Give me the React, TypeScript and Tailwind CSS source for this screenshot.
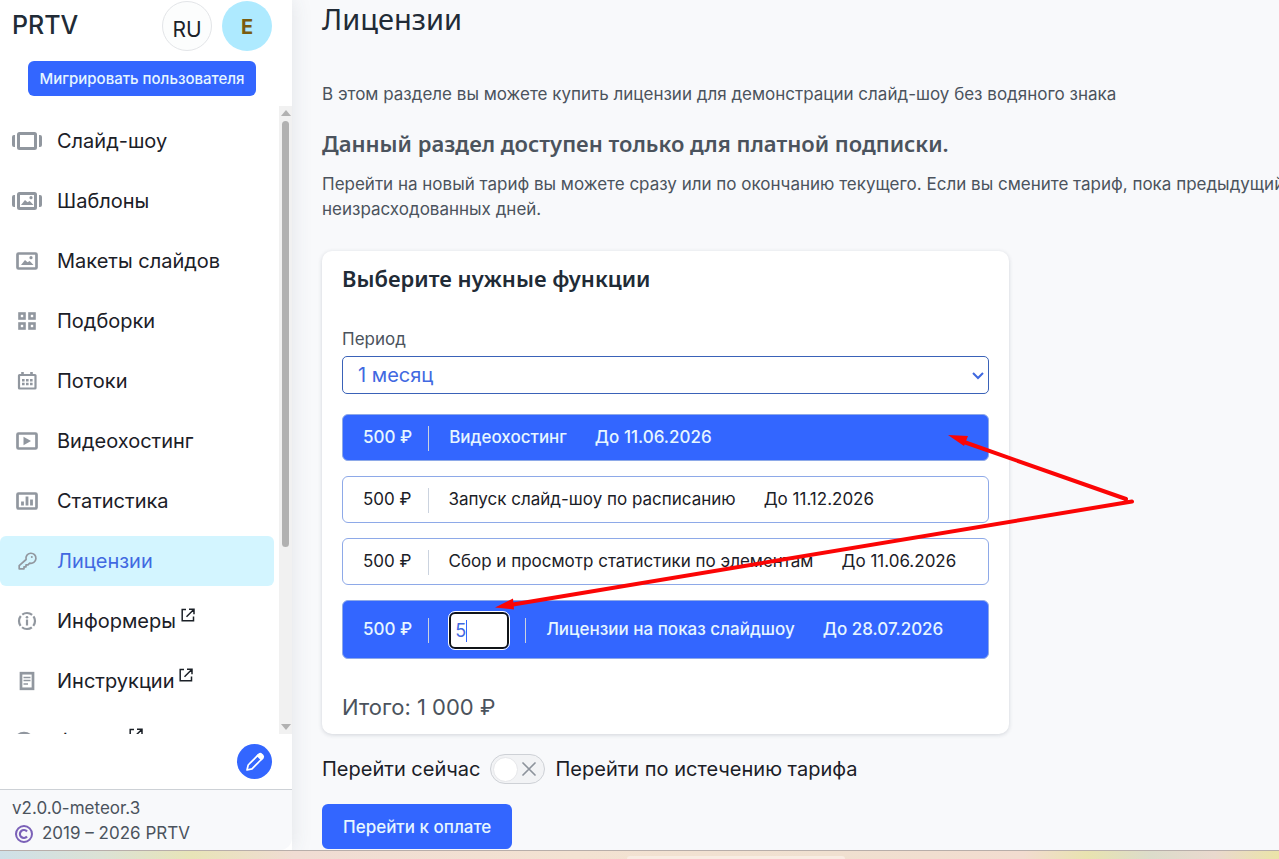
import { ReactNode, useState } from "react";
import { clsx } from "clsx";

type IconName =
  | "slideshow"
  | "templates"
  | "image"
  | "grid"
  | "calendar"
  | "video"
  | "stats"
  | "key"
  | "info"
  | "doc"
  | "forum";

interface MenuItem {
  label: string;
  icon: IconName;
  external?: boolean;
}

const menuItems: MenuItem[] = [
  { label: "Слайд-шоу", icon: "slideshow" },
  { label: "Шаблоны", icon: "templates" },
  { label: "Макеты слайдов", icon: "image" },
  { label: "Подборки", icon: "grid" },
  { label: "Потоки", icon: "calendar" },
  { label: "Видеохостинг", icon: "video" },
  { label: "Статистика", icon: "stats" },
  { label: "Лицензии", icon: "key" },
  { label: "Информеры", icon: "info", external: true },
  { label: "Инструкции", icon: "doc", external: true },
  { label: "Форум", icon: "forum", external: true },
];

const picture = (
  <g fill="currentColor" stroke="none">
    <path d="M9 19l4-5 2.500 2.300 2.200-1.300 3.800 4z" />
    <circle cx="19" cy="11.700" r="1.600" />
  </g>
);

const sideBars = (
  <path
    d="M3 9v12h-1a2 2 0 0 1-2-2v-8a2 2 0 0 1 2-2zM27 9v12h1a2 2 0 0 0 2-2v-8a2 2 0 0 0-2-2z"
    fill="currentColor"
    stroke="none"
  />
);

const iconShapes: Record<IconName, ReactNode> = {
  slideshow: (
    <>
      <rect x="6.500" y="7.500" width="17" height="15" rx="1" strokeWidth="3" />
      {sideBars}
    </>
  ),
  templates: (
    <>
      <rect x="6.500" y="7.500" width="17" height="15" rx="1" strokeWidth="3" />
      {sideBars}
      {picture}
    </>
  ),
  image: (
    <>
      <rect x="5.500" y="7.500" width="19" height="15" rx="1" />
      {picture}
    </>
  ),
  grid: (
    <g strokeWidth="2.600">
      <rect x="7.500" y="7.500" width="5" height="5" />
      <rect x="17.500" y="7.500" width="5" height="5" />
      <rect x="7.500" y="17.500" width="5" height="5" />
      <rect x="17.500" y="17.500" width="5" height="5" />
    </g>
  ),
  calendar: (
    <>
      <rect x="7" y="9" width="16.500" height="13.500" rx="0.500" strokeWidth="2.200" />
      <path d="M10.500 6v4M19.500 6v4" strokeWidth="2.600" />
      <path
        d="M10 14.300h2.600M14 14.300h2.600M18 14.300h2.600M10 18h2.600M14 18h2.600M18 18h2.600"
        strokeWidth="2.600"
      />
    </>
  ),
  video: (
    <>
      <rect x="5.500" y="7.500" width="19" height="15" rx="1" />
      <path d="M11.500 10.800v8.400l7.500-4.200z" fill="currentColor" stroke="none" />
    </>
  ),
  stats: (
    <>
      <rect x="5.500" y="7.500" width="19" height="15" rx="1" />
      <path d="M10.500 19.500v-4M15 19.500v-9M19.500 19.500v-6" strokeWidth="2.800" />
    </>
  ),
  key: (
    <>
      <path
        d="M14.100 13.500a5 5 0 1 1 3.600 3.600l-1.700 1.700h-2v2h-2v2H7.200v-3.200z"
        strokeWidth="1.700"
        strokeLinejoin="round"
      />
      <circle cx="19.800" cy="11" r="1" fill="currentColor" stroke="none" />
    </>
  ),
  info: (
    <>
      <circle cx="15" cy="15" r="8" strokeWidth="2.200" strokeDasharray="10.560 2" strokeDashoffset="-7.300" />
      <path d="M15 13.500v6" strokeWidth="2.200" />
      <circle cx="15" cy="11.300" r="1.300" fill="currentColor" stroke="none" />
    </>
  ),
  doc: (
    <>
      <rect x="9" y="7.200" width="12" height="15.600" />
      <path d="M11.500 11.500h7M11.500 14.500h7M11.500 18h4.500" strokeWidth="1.700" />
    </>
  ),
  forum: <circle cx="12" cy="16" r="9" />,
};

function MenuIcon({ name }: { name: IconName }) {
  return (
    <svg
      viewBox="0 0 30 30"
      className="size-[30px] shrink-0 text-[#91979f]"
      fill="none"
      stroke="currentColor"
      strokeWidth="2.700"
      aria-hidden="true"
    >
      {iconShapes[name]}
    </svg>
  );
}

function ExternalIcon() {
  return (
    <svg
      viewBox="0 0 14 14"
      className="ml-[5px] mb-3 size-3.5"
      fill="none"
      stroke="currentColor"
      strokeWidth="1.500"
      aria-hidden="true"
    >
      <path d="M5 1.500H1.200v11.300h11.300V8.500M8 1.200h5v5M13 1.200L5.500 8.700" />
    </svg>
  );
}

function Sidebar() {
  return (
    <aside className="flex w-[292px] shrink-0 flex-col bg-white shadow-[0_0_20px_rgba(60,70,90,0.12)]">
      <header className="h-[106px] shrink-0 pt-px">
        <div className="flex items-center gap-2.5 pr-5 pl-3">
          <a href="#" className="mr-auto text-[25px] font-medium text-[#212b36]">
            PRTV
          </a>
          <button className="size-[50px] rounded-full border border-[#e3e5e8] bg-[#fcfdfd] pt-2 text-[21px] text-[#1b2229]">
            RU
          </button>
          <button className="size-[50px] rounded-full bg-[#aeeaff] pt-0.5 text-xl font-bold text-[#7a5c10]">
            E
          </button>
        </div>
        <button className="mt-2.5 ml-7 h-[35px] w-[228px] rounded-md bg-[#3366ff] pt-0.5 text-[15px] font-medium text-[#e6f6ff]">
          Мигрировать пользователя
        </button>
      </header>

      <div className="flex min-h-0 flex-1">
        <nav className="flex flex-1 flex-col gap-2.5 overflow-hidden pt-2.5 pr-[5px]">
          {menuItems.map((item) => {
            const active = item.icon === "key";
            return (
              <a
                key={item.label}
                href="#"
                className={clsx(
                  "flex h-[50px] shrink-0 items-center rounded-md pl-3 text-xl",
                  active ? "bg-[#d3f5ff] text-[#4169e1]" : "text-[#1b2027]"
                )}
              >
                <MenuIcon name={item.icon} />
                <span className="ml-[15px]">{item.label}</span>
                {item.external && <ExternalIcon />}
              </a>
            );
          })}
        </nav>
        {/* scrollbar */}
        <div className="flex w-[13px] flex-col items-center bg-[#f1f1f1] py-1">
          <div className="border-x-5 border-b-6 border-x-transparent border-b-[#b1b1b1]" />
          <div className="mt-[5px] h-[426px] w-[7px] rounded-full bg-[#b1b1b1]" />
          <div className="mt-auto border-x-5 border-t-6 border-x-transparent border-t-[#b1b1b1]" />
        </div>
      </div>

      <div className="flex h-[55px] shrink-0 items-start justify-end pt-2.5 pr-5">
        <button
          aria-label="Редактировать"
          className="flex size-[35px] items-center justify-center rounded-full bg-[#3366ff] text-white"
        >
          <svg viewBox="0 0 20 20" className="size-5" fill="none" stroke="currentColor" strokeWidth="1.700" strokeLinejoin="round">
            <path d="M2 18l1.200-5L13 3.200l3.800 3.800L7 16.800z" />
            <path d="M12.500 3.700l1.700-1.700q1.300-.8 2.600.5l.7.700q1.300 1.300.5 2.600l-1.700 1.700z" fill="currentColor" />
          </svg>
        </button>
      </div>

      <footer className="h-[61px] shrink-0 rounded-br-xl border-t border-[#cdd1d6] bg-[#f8f9fb] pt-1.5 pl-3 text-[17px] leading-[25px] text-[#4b535d]">
        <p>v2.0.0-meteor.3</p>
        <p className="flex items-center">
          <svg viewBox="0 0 20 20" className="ml-0.5 mr-2 size-5" fill="none" stroke="#7b61b8" strokeWidth="2" aria-hidden="true">
            <circle cx="10" cy="10" r="8" />
            <path d="M13 7.500a4 4 0 1 0 0 5" strokeWidth="2.200" />
          </svg>
          2019 – 2026 PRTV
        </p>
      </footer>
    </aside>
  );
}

interface Feature {
  id: string;
  title: string;
  until: string;
}

const features: Feature[] = [
  { id: "video", title: "Видеохостинг", until: "11.06.2026" },
  { id: "schedule", title: "Запуск слайд-шоу по расписанию", until: "11.12.2026" },
  { id: "elements", title: "Сбор и просмотр статистики по элементам", until: "11.06.2026" },
];

const rowClass = "flex items-center rounded-md border border-[#8ea9e8] px-5 pt-px text-[17px] whitespace-nowrap";

function Divider() {
  return <span className="mx-4 h-[25px] w-px shrink-0 bg-[#cbd3df]" />;
}

function FeatureForm() {
  const [selected, setSelected] = useState<string[]>(["video"]);
  const [count, setCount] = useState("5");

  const toggle = (id: string) => {
    setSelected(
      selected.includes(id) ? selected.filter((s) => s !== id) : [...selected, id]
    );
  };

  return (
    <section className="mt-[29px] w-full max-w-[687px] rounded-[10px] bg-white px-5 pt-[11px] pb-[11px] shadow-[0_1px_4px_rgba(40,50,70,0.18)]">
      <h3 className="font-['Noto_Sans',sans-serif] text-[22px] leading-8 font-semibold text-[#212b36]">
        Выберите нужные функции
      </h3>
      <label htmlFor="period" className="mt-[33px] block text-[17px] leading-[25px]">
        Период
      </label>
      <div className="relative mt-1">
        <select
          id="period"
          className="h-[38px] w-full appearance-none rounded-[5px] border border-[#3a62b8] bg-white pl-[15px] text-xl text-[#4169e1]"
        >
          <option>1 месяц</option>
        </select>
        <svg
          viewBox="0 0 12 8"
          className="pointer-events-none absolute top-4 right-[5px] h-2 w-3"
          fill="none"
          stroke="#3f68df"
          strokeWidth="2"
          aria-hidden="true"
        >
          <path d="M1 1l5 5 5-5" />
        </svg>
      </div>

      <div className="mt-5 flex flex-col gap-[15px]">
        {features.map((feature) => {
          const checked = selected.includes(feature.id);
          return (
            <label
              key={feature.id}
              className={clsx(
                rowClass,
                "relative h-[47px] cursor-pointer",
                checked ? "bg-[#3366ff] font-medium text-[#e6f6ff]" : "bg-white text-[#1b2027]"
              )}
            >
              <input
                type="checkbox"
                className="sr-only"
                checked={checked}
                onChange={() => toggle(feature.id)}
              />
              <span>500 ₽</span>
              <Divider />
              <span className="ml-1">{feature.title}</span>
              <span className="ml-7">До {feature.until}</span>
            </label>
          );
        })}
        <div className={clsx(rowClass, "h-[59px] bg-[#3366ff] font-medium text-[#e6f6ff]")}>
          <span>500 ₽</span>
          <Divider />
          <span className="relative ml-1">
            <input
              id="license-count"
              type="text"
              inputMode="numeric"
              value={count}
              onChange={(e) => setCount(e.target.value)}
              className="block h-[37px] w-[60px] rounded-md border-2 border-[#101418] bg-white pl-1 text-lg font-normal text-[#4169e1] outline outline-white"
            />
            <span className="absolute top-2 left-[17px] h-[22px] w-px bg-[#3366ff]" />
          </span>
          <Divider />
          <label htmlFor="license-count" className="ml-1">
            Лицензии на показ слайдшоу
          </label>
          <span className="ml-7">До 28.07.2026</span>
        </div>
      </div>

      <p className="mt-8 text-[22px] leading-8">Итого: 1 000 ₽</p>
    </section>
  );
}

// Red pointer lines drawn over the form
function Arrows() {
  return (
    <svg
      viewBox="0 0 660 200"
      className="pointer-events-none absolute top-[420px] left-[490px] h-[200px] w-[660px]"
      stroke="#fb0505"
      strokeWidth="4"
      strokeLinecap="round"
      aria-hidden="true"
    >
      <path d="M636 79L474 22M642 81.500L20 185" />
      <path d="M458 15l20 1-4 10zM5 187.500l18-9 1 11z" fill="#fb0505" stroke="none" />
    </svg>
  );
}

export default function App() {
  const [later, setLater] = useState(false);

  return (
    <div className="relative flex h-screen flex-col overflow-hidden bg-[#f8f9fb] font-['Inter','Liberation_Sans',sans-serif] text-[#4b535d]">
      <div className="flex min-h-0 flex-1">
        <Sidebar />
        <main className="min-w-0 flex-1 overflow-hidden pl-[30px]">
          <h1 className="font-['Noto_Sans',sans-serif] text-[29px] leading-[38px] text-[#212b36]">
            Лицензии
          </h1>
          <p className="mt-11 text-[17px] leading-[25px]">
            В этом разделе вы можете купить лицензии для демонстрации слайд-шоу без водяного знака
          </p>
          <h2 className="mt-5 font-['Noto_Sans',sans-serif] text-[22px] leading-8 font-semibold">
            Данный раздел доступен только для платной подписки.
          </h2>
          <p className="mt-[13px] text-[17px] leading-[25px] whitespace-nowrap">
            Перейти на новый тариф вы можете сразу или по окончанию текущего. Если вы смените тариф, пока предыдущий
            <br />
            неизрасходованных дней.
          </p>

          <FeatureForm />

          <label className="mt-5 flex h-[30px] w-fit items-center gap-2.5 text-xl text-[#1b2027]">
            <span>Перейти сейчас</span>
            <input
              type="checkbox"
              role="switch"
              className="sr-only"
              checked={later}
              onChange={() => setLater(!later)}
            />
            <span
              className={clsx(
                "flex h-[30px] w-[55px] items-center justify-between rounded-full border border-[#ced1d6] bg-[#f2f3f5] pr-2 pl-0.5",
                later && "flex-row-reverse"
              )}
            >
              <span className="size-[25px] rounded-full border border-[#e6e7ea] bg-white" />
              <svg viewBox="0 0 14 14" className="size-3.5" stroke="#8d939c" strokeWidth="1.700" strokeLinecap="round" aria-hidden="true">
                <path d="M1 1l12 12M13 1L1 13" />
              </svg>
            </span>
            <span>Перейти по истечению тарифа</span>
          </label>

          <button className="mt-5 h-[45px] rounded-md bg-[#3366ff] px-[21px] pt-0.5 text-[17px] font-medium text-[#e6f6ff]">
            Перейти к оплате
          </button>
        </main>
      </div>

      <div className="flex h-[9px] shrink-0 items-end justify-center border-t border-[#b8aeaa] bg-[linear-gradient(90deg,#cfe0e8_0%,#dce2d5_8%,#e8e4b8_15%,#f0dcd3_23%,#f3e2d2_45%,#f0e0d0_65%,#f2dcd0_80%,#e9e3b0_85%,#dcdccb_90%,#ead9ce_95%,#ebe4a8_100%)]">
        <div className="ml-[193px] h-[3px] w-[218px] rounded-t bg-[#f8ece2]" />
      </div>

      <Arrows />
    </div>
  );
}
